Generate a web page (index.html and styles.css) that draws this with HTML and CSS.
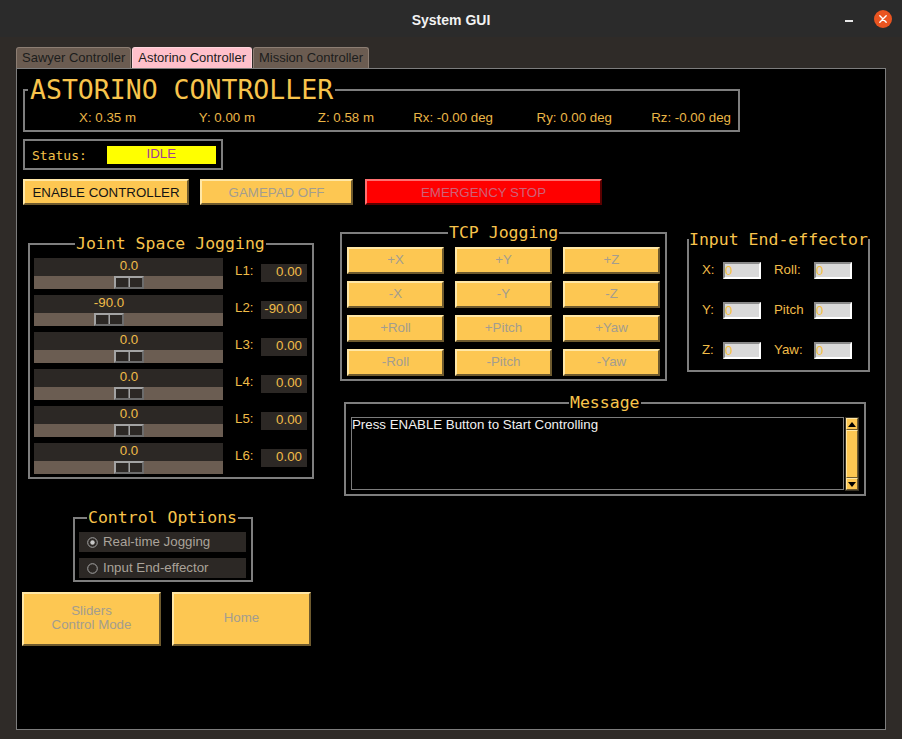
FILE: index.html
```html
<!DOCTYPE html>
<html lang="en">
<head>
<meta charset="utf-8">
<title>System GUI</title>
<link rel="stylesheet" href="styles.css">
</head>
<body>
<div class="window">
  <div class="titlebar">
    <div></div>
    <div class="title">System GUI</div>
    <div class="wctrls">
      <span class="min"></span>
      <span class="close"><svg width="18" height="18" viewBox="0 0 18 18"><circle cx="9" cy="9" r="9" fill="#e95420"/><path d="M5.8 5.8L12.2 12.2M12.2 5.8L5.8 12.2" stroke="#fff" stroke-width="1.4" stroke-linecap="round"/></svg></span>
    </div>
  </div>
  <div class="main">
    <div class="tabs">
      <div class="tab">Sawyer Controller</div>
      <div class="tab active">Astorino Controller</div>
      <div class="tab">Mission Controller</div>
    </div>
    <div class="frame">
      <div class="lf hdr">
        <div class="lf-title big">ASTORINO CONTROLLER</div>
        <div class="coords">
          <span>X: 0.35 m</span><span>Y: 0.00 m</span><span>Z: 0.58 m</span>
          <span>Rx: -0.00 deg</span><span>Ry: 0.00 deg</span><span>Rz: -0.00 deg</span>
        </div>
      </div>
      <div class="status">
        <span class="status-lbl">Status:</span>
        <span class="idle">IDLE</span>
      </div>
      <div class="btnrow">
        <div class="btn btn-enable">ENABLE CONTROLLER</div>
        <div class="btn btn-gamepad">GAMEPAD OFF</div>
        <div class="btn btn-estop">EMERGENCY STOP</div>
      </div>
      <div class="lower">
        <div class="leftcol">
          <div class="lf joint">
            <div class="lf-title">Joint Space Jogging</div>
            <div class="jrows">
              <div class="jrow">
                <div class="slider" style="--pos:80px"><div class="sl-top"><div class="sl-val">0.0</div></div><div class="sl-trough"><div class="thumb"></div></div></div>
                <span class="jlbl">L1:</span><span class="jent">0.00</span>
              </div>
              <div class="jrow">
                <div class="slider" style="--pos:60px"><div class="sl-top"><div class="sl-val">-90.0</div></div><div class="sl-trough"><div class="thumb"></div></div></div>
                <span class="jlbl">L2:</span><span class="jent">-90.00</span>
              </div>
              <div class="jrow">
                <div class="slider" style="--pos:80px"><div class="sl-top"><div class="sl-val">0.0</div></div><div class="sl-trough"><div class="thumb"></div></div></div>
                <span class="jlbl">L3:</span><span class="jent">0.00</span>
              </div>
              <div class="jrow">
                <div class="slider" style="--pos:80px"><div class="sl-top"><div class="sl-val">0.0</div></div><div class="sl-trough"><div class="thumb"></div></div></div>
                <span class="jlbl">L4:</span><span class="jent">0.00</span>
              </div>
              <div class="jrow">
                <div class="slider" style="--pos:80px"><div class="sl-top"><div class="sl-val">0.0</div></div><div class="sl-trough"><div class="thumb"></div></div></div>
                <span class="jlbl">L5:</span><span class="jent">0.00</span>
              </div>
              <div class="jrow">
                <div class="slider" style="--pos:80px"><div class="sl-top"><div class="sl-val">0.0</div></div><div class="sl-trough"><div class="thumb"></div></div></div>
                <span class="jlbl">L6:</span><span class="jent">0.00</span>
              </div>
            </div>
          </div>
          <div class="lf ctrl">
            <div class="lf-title">Control Options</div>
            <div class="radios">
              <div class="radio"><svg width="11" height="11" viewBox="0 0 11 11"><circle cx="5.5" cy="5.5" r="4.8" fill="#2c2825" stroke="#a6a6a6" stroke-width="1"/><circle cx="5.5" cy="5.5" r="2.2" fill="#c9c9c9"/></svg><span>Real-time Jogging</span></div>
              <div class="radio"><svg width="11" height="11" viewBox="0 0 11 11"><circle cx="5.5" cy="5.5" r="4.8" fill="#2c2825" stroke="#a6a6a6" stroke-width="1"/></svg><span>Input End-effector</span></div>
            </div>
          </div>
          <div class="bbtns">
            <div class="btn bbtn">Sliders<br>Control Mode</div>
            <div class="btn bbtn">Home</div>
          </div>
        </div>
        <div class="rightcol">
          <div class="toprow">
            <div class="lf tcp">
              <div class="lf-title">TCP Jogging</div>
              <div class="tcpgrid">
                <div class="btn">+X</div><div class="btn">+Y</div><div class="btn">+Z</div>
                <div class="btn">-X</div><div class="btn">-Y</div><div class="btn">-Z</div>
                <div class="btn">+Roll</div><div class="btn">+Pitch</div><div class="btn">+Yaw</div>
                <div class="btn">-Roll</div><div class="btn">-Pitch</div><div class="btn">-Yaw</div>
              </div>
            </div>
            <div class="lf iee">
              <div class="lf-title">Input End-effector</div>
              <div class="ieegrid">
                <span class="ilbl">X:</span><span class="ient">0</span><span class="ilbl">Roll:</span><span class="ient">0</span>
                <span class="ilbl">Y:</span><span class="ient">0</span><span class="ilbl">Pitch</span><span class="ient">0</span>
                <span class="ilbl">Z:</span><span class="ient">0</span><span class="ilbl">Yaw:</span><span class="ient">0</span>
              </div>
            </div>
          </div>
          <div class="lf msg">
            <div class="lf-title">Message</div>
            <div class="msgbody">
              <div class="textarea">Press ENABLE Button to Start Controlling</div>
              <div class="sb">
                <div class="sb-arrow"><svg width="8" height="5" viewBox="0 0 8 5"><polygon points="4,0 8,5 0,5" fill="#000"/></svg></div>
                <div class="sb-thumb"></div>
                <div class="sb-arrow"><svg width="8" height="5" viewBox="0 0 8 5"><polygon points="0,0 8,0 4,5" fill="#000"/></svg></div>
              </div>
            </div>
          </div>
        </div>
      </div>
    </div>
  </div>
</div>
</body>
</html>
```
FILE: styles.css
```css
* { box-sizing: border-box; margin: 0; padding: 0; }
html, body { width: 902px; height: 739px; overflow: hidden; background: #2f2b28; }
body {
  font-family: "Liberation Sans", Arial, sans-serif;
  font-size: 13.3px;
  line-height: 15px;
  color: #f0bc48;
}
.window { width: 902px; height: 739px; display: flex; flex-direction: column; background: #2f2b28; }

.titlebar {
  height: 37px;
  flex: none;
  background: #2b2b2b;
  display: grid;
  grid-template-columns: 1fr auto 1fr;
  align-items: center;
}
.title { font-weight: bold; font-size: 14px; color: #f2f2f2; padding-top: 3px; }
.wctrls { display: flex; align-items: center; justify-content: flex-end; padding-right: 10px; gap: 21px; }
.min { width: 8px; height: 2px; background: #e8e8e8; margin-top: 5px; }
.close { display: flex; width: 18px; height: 18px; }

.main { flex: 1; padding: 10px 16px 9px; }
.tabs { display: flex; gap: 1px; height: 21px; }
.tab {
  padding: 0 5px;
  font-size: 13px;
  background: #6b5c51;
  color: #1c1c1c;
  border: 1px solid #8d7e73;
  border-bottom: none;
  border-radius: 3px 3px 0 0;
  line-height: 20px;
  white-space: nowrap;
}
.tab.active { background: #ffc0cb; border-color: #ffd6dd; }
.frame { height: 662px; border: 1px solid #7d7d7d; background: #000; }

.lf { border: 2px solid #7e7e7e; }
.lf-title {
  font-family: "DejaVu Sans Mono", monospace;
  font-size: 16.5px;
  line-height: 20px;
  color: #f8c44c;
  background: #000;
  width: max-content;
  padding: 0 1px;
  margin-top: -11px;
}
.lf-title.big { font-size: 26.5px; line-height: 30px; margin-top: -16px; margin-left: 3px; padding: 0 2px; }

.hdr { margin: 20px 0 0 6px; width: 717px; padding-bottom: 5px; }
.coords {
  display: grid;
  grid-template-columns: 111px repeat(5, 119px);
  margin-top: 5px;
  text-align: right;
  color: #ebb647;
  white-space: nowrap;
}

.status {
  margin: 7px 0 0 6px;
  width: 200px;
  height: 31px;
  border: 2px solid #7e7e7e;
  display: flex;
  align-items: center;
}
.status-lbl { font-family: "DejaVu Sans Mono", monospace; font-size: 13px; margin-left: 7px; color: #f5c24a; padding-top: 1px; }
.idle { margin-left: 20px; width: 109px; height: 18px; background: #ffff00; color: #a03c9c; text-align: center; line-height: 15px; }

.btn {
  background: #fdc752;
  border: 2px solid;
  border-color: #ffe7a6 #6e5a2e #6e5a2e #ffe7a6;
  color: #a39d8f;
  display: flex;
  align-items: center;
  justify-content: center;
  text-align: center;
  white-space: nowrap;
}
.btnrow { display: flex; margin: 9px 0 0 6px; height: 26px; }
.btn-enable { width: 166px; color: #141414; }
.btn-gamepad { width: 153px; margin-left: 11px; }
.btn-estop { width: 237px; margin-left: 12px; background: #ff0000; border-color: #ff7070 #5a0000 #5a0000 #ff7070; color: #cf6078; }

.lower { display: flex; }
.leftcol { width: 297px; flex: none; }
.joint { margin: 38px 0 0 11px; width: 286px; padding-bottom: 3px; }
.joint .lf-title { margin-left: 45px; }
.jrows { margin-top: 4px; display: flex; flex-direction: column; gap: 6px; }
.jrow { display: flex; align-items: flex-start; margin-left: 4px; }
.slider { width: 189px; flex: none; }
.sl-top { height: 18px; background: #2c2825; }
.sl-val { margin-left: var(--pos); width: 30px; display: flex; justify-content: center; white-space: nowrap; line-height: 15px; }
.sl-trough { height: 13px; background: #6b5d52; }
.thumb {
  margin-left: var(--pos);
  width: 30px;
  height: 13px;
  border: 2px solid;
  border-color: #a3a3a3 #6c6c6c #6c6c6c #a3a3a3;
  background: #2c2825;
  display: flex;
}
.thumb::before { content: ""; width: 12px; border-right: 1px solid #6c6c6c; }
.thumb::after { content: ""; flex: 1; border-left: 1px solid #a3a3a3; }
.jlbl { width: 26px; margin: 5px 0 0 12px; }
.jent { width: 46px; height: 18px; margin-top: 6px; background: #2c2825; text-align: right; padding-right: 5px; line-height: 16px; }

.ctrl { margin: 38px 0 0 56px; width: 180px; padding-bottom: 2px; }
.ctrl .lf-title { margin-left: 12px; }
.radios { margin: 4px 0 0 4px; display: flex; flex-direction: column; gap: 6px; }
.radio { width: 167px; height: 20px; background: #2c2825; display: flex; align-items: center; color: #aaa39a; padding-left: 8px; gap: 5px; }
.radio span { margin-top: -2px; }

.bbtns { display: flex; gap: 11px; margin: 10px 0 0 5px; }
.bbtn { width: 139px; height: 54px; line-height: 14px; padding-bottom: 2px; }

.rightcol { flex: none; width: 560px; }
.toprow { display: flex; align-items: flex-start; }
.tcp { margin: 27px 0 0 26px; width: 327px; padding-bottom: 3px; }
.tcp .lf-title { margin-left: 106px; }
.tcpgrid { display: grid; grid-template-columns: repeat(3, 97px); grid-auto-rows: 27px; gap: 7px 11px; margin: 4px 0 0 5px; }
.tcpgrid .btn { padding-bottom: 2px; }

.iee { margin: 34px 0 0 20px; width: 183px; padding-bottom: 11px; }
.iee .lf-title { padding: 0; }
.ieegrid {
  display: grid;
  grid-template-columns: 34px 38px 53px 38px;
  grid-auto-rows: 17px;
  row-gap: 23px;
  margin-top: 12px;
  align-items: center;
}
.ilbl { padding-left: 13px; margin-top: -2px; }
.ient {
  height: 17px;
  background: #d9d9d9;
  border: 2px solid;
  border-color: #8a8a8a #ffffff #ffffff #8a8a8a;
  line-height: 13px;
  color: #f5c040;
}

.msg { margin: 21px 0 0 30px; width: 522px; padding-bottom: 3px; }
.msg .lf-title { margin-left: 223px; }
.msgbody { display: flex; margin: 4px 0 0 5px; gap: 1px; align-items: flex-start; }
.textarea { width: 493px; height: 73px; border: 1px solid #7c7c7c; color: #f2f2f2; line-height: 13px; padding-top: 0; }
.sb { width: 14px; height: 74px; display: flex; flex-direction: column; background: #fdc752; border: 1px solid #3a3426; }
.sb-arrow {
  height: 12px;
  border: 1px solid;
  border-color: #ffe7a6 #6e5a2e #6e5a2e #ffe7a6;
  display: flex;
  align-items: center;
  justify-content: center;
}
.sb-thumb { flex: 1; border: 1px solid; border-color: #ffe7a6 #6e5a2e #6e5a2e #ffe7a6; }
```
